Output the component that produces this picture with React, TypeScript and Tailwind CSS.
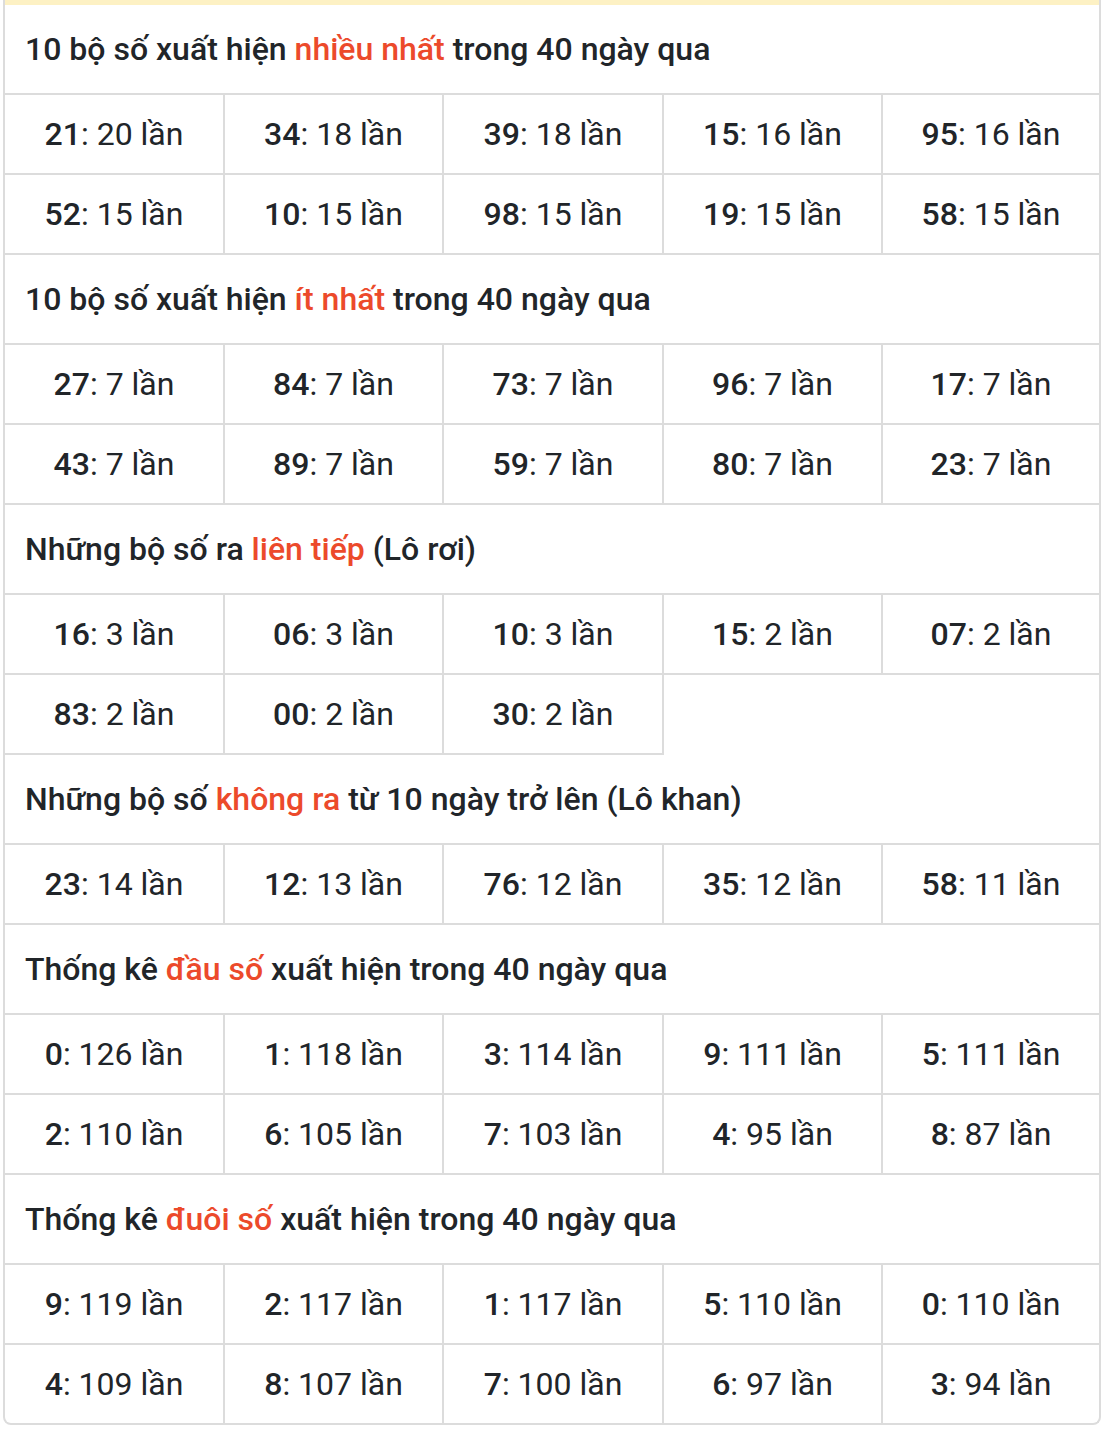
import React from "react";

type Item = { num: string; count: string };

type Section = {
  before: string;
  highlight: string;
  after: string;
  items: Item[];
};

const mk = (list: [string, string][]): Item[] =>
  list.map(([num, count]) => ({ num, count }));

const sections: Section[] = [
  {
    before: "10 bộ số xuất hiện ",
    highlight: "nhiều nhất",
    after: " trong 40 ngày qua",
    items: mk([
      ["21", "20"],
      ["34", "18"],
      ["39", "18"],
      ["15", "16"],
      ["95", "16"],
      ["52", "15"],
      ["10", "15"],
      ["98", "15"],
      ["19", "15"],
      ["58", "15"],
    ]),
  },
  {
    before: "10 bộ số xuất hiện ",
    highlight: "ít nhất",
    after: " trong 40 ngày qua",
    items: mk([
      ["27", "7"],
      ["84", "7"],
      ["73", "7"],
      ["96", "7"],
      ["17", "7"],
      ["43", "7"],
      ["89", "7"],
      ["59", "7"],
      ["80", "7"],
      ["23", "7"],
    ]),
  },
  {
    before: "Những bộ số ra ",
    highlight: "liên tiếp",
    after: " (Lô rơi)",
    items: mk([
      ["16", "3"],
      ["06", "3"],
      ["10", "3"],
      ["15", "2"],
      ["07", "2"],
      ["83", "2"],
      ["00", "2"],
      ["30", "2"],
    ]),
  },
  {
    before: "Những bộ số ",
    highlight: "không ra",
    after: " từ 10 ngày trở lên (Lô khan)",
    items: mk([
      ["23", "14"],
      ["12", "13"],
      ["76", "12"],
      ["35", "12"],
      ["58", "11"],
    ]),
  },
  {
    before: "Thống kê ",
    highlight: "đầu số",
    after: " xuất hiện trong 40 ngày qua",
    items: mk([
      ["0", "126"],
      ["1", "118"],
      ["3", "114"],
      ["9", "111"],
      ["5", "111"],
      ["2", "110"],
      ["6", "105"],
      ["7", "103"],
      ["4", "95"],
      ["8", "87"],
    ]),
  },
  {
    before: "Thống kê ",
    highlight: "đuôi số",
    after: " xuất hiện trong 40 ngày qua",
    items: mk([
      ["9", "119"],
      ["2", "117"],
      ["1", "117"],
      ["5", "110"],
      ["0", "110"],
      ["4", "109"],
      ["8", "107"],
      ["7", "100"],
      ["6", "97"],
      ["3", "94"],
    ]),
  },
];

const App = () => {
  return (
    <div
      className="bg-white min-h-screen text-[#212529]"
      style={{ fontFamily: "Roboto, 'Noto Sans', sans-serif" }}>
      <div className="ml-[3px] w-[1098px] border-2 border-t-0 border-[#dcdcdc] rounded-b-[8px] overflow-hidden">
        <div className="-mb-[2px]">
          <div className="h-[5px] bg-[#fdf1c4]" />
          {sections.map((section, i) => (
            <div key={i}>
              <div className="h-[90px] flex items-center px-[20px] border-b-2 border-[#dcdcdc] text-[32px] font-medium leading-none">
                <span>
                  {section.before}
                  <span className="text-[#ec4a2b]">{section.highlight}</span>
                  {section.after}
                </span>
              </div>
              <div className="grid grid-cols-[220px_219px_220px_219px_1fr]">
                {section.items.map((item, j) => (
                  <div
                    key={j}
                    className="h-[80px] flex items-center justify-center border-b-2 border-r-2 border-[#dcdcdc] [&:nth-child(5n)]:border-r-0 text-[32px] leading-none">
                    <span className="font-medium">{item.num}</span>
                    <span>: {item.count} lần</span>
                  </div>
                ))}
              </div>
            </div>
          ))}
        </div>
      </div>
    </div>
  );
};

export default App;
